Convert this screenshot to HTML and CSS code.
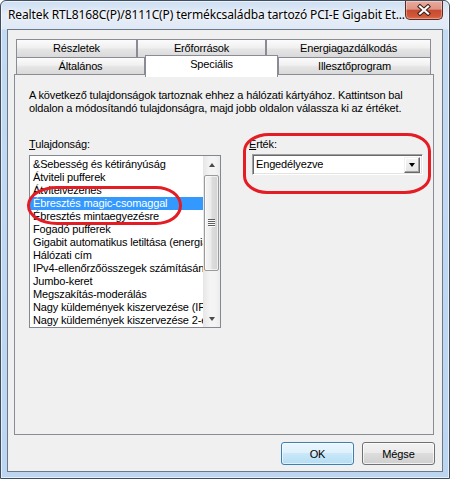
FILE: index.html
```html
<!DOCTYPE html>
<html>
<head>
<meta charset="utf-8">
<link rel="stylesheet" href="styles.css">
</head>
<body>
<div class="window">
  <div class="titlebar">
    <span class="title">Realtek RTL8168C(P)/8111C(P) termékcsaládba tartozó PCI-E Gigabit Et...</span>
    <div class="close">
      <svg width="14" height="12" viewBox="0 0 14 12">
        <path d="M3 2.5 L11 9.5 M11 2.5 L3 9.5" stroke="#3b1f1a" stroke-width="4.2" stroke-linecap="square" fill="none"/>
        <path d="M3 2.5 L11 9.5 M11 2.5 L3 9.5" stroke="#ffffff" stroke-width="2.2" stroke-linecap="square" fill="none"/>
      </svg>
    </div>
  </div>
  <div class="client">
    <div class="tabs">
      <div class="tabrow row1">
        <div class="tab w121">Részletek</div>
        <div class="tab w129">Erőforrások</div>
        <div class="tab w165">Energiagazdálkodás</div>
      </div>
      <div class="tabrow row2">
        <div class="tab w129">Általános</div>
        <div class="tab w133 selected">Speciális</div>
        <div class="tab w153">Illesztőprogram</div>
      </div>
    </div>
    <div class="panel">
      <p class="desc">A következő tulajdonságok tartoznak ehhez a hálózati kártyához. Kattintson bal<br>oldalon a módosítandó tulajdonságra, majd jobb oldalon válassza ki az értéket.</p>
      <div class="fields">
        <div class="col-left">
          <div class="label"><u>T</u>ulajdonság:</div>
          <div class="listbox">
            <ul class="items">
              <li>&amp;Sebesség és kétirányúság</li>
              <li>Átviteli pufferek</li>
              <li>Átvitelvezérlés</li>
              <li class="sel">Ébresztés magic-csomaggal</li>
              <li>Ébresztés mintaegyezésre</li>
              <li>Fogadó pufferek</li>
              <li>Gigabit automatikus letiltása (energiagazdálkodás)</li>
              <li>Hálózati cím</li>
              <li>IPv4-ellenőrzőösszegek számításának kiszervezése</li>
              <li>Jumbo-keret</li>
              <li>Megszakítás-moderálás</li>
              <li>Nagy küldemények kiszervezése (IPv4)</li>
              <li>Nagy küldemények kiszervezése 2-es verzió (IPv4)</li>
            </ul>
            <div class="vscroll">
              <div class="sbtn"><span class="arrow up"></span></div>
              <div class="track"><div class="thumb"><span class="grip"></span></div></div>
              <div class="sbtn"><span class="arrow down"></span></div>
            </div>
          </div>
        </div>
        <div class="col-right">
          <div class="label"><u>É</u>rték:</div>
          <div class="combo">
            <span class="combo-text">Engedélyezve</span>
            <div class="drop"><span class="arrow down dark"></span></div>
          </div>
        </div>
      </div>
    </div>
    <div class="buttons">
      <button class="btn default">OK</button>
      <button class="btn">Mégse</button>
    </div>
  </div>
  <div class="mark mark1"></div>
  <div class="mark mark2"></div>
</div>
</body>
</html>
```

FILE: styles.css
```css
* { box-sizing: border-box; }
html, body { margin: 0; padding: 0; background: #ffffff; }
body {
  width: 450px; height: 479px; overflow: hidden;
  font-family: "Liberation Sans", Arial, sans-serif;
  font-size: 11px; color: #000;
  letter-spacing: -0.15px;
}
.window {
  position: relative;
  width: 450px; height: 479px;
  border: 1px solid #3f4d5e;
  border-radius: 6px 6px 0 0;
  padding: 0 6px 6px;
  background: linear-gradient(to bottom, #cddff3 0px, #e4ecf7 14px, #e0eaf6 28px, #c3daf2 29px, #bcd6f1 100%);
  box-shadow: inset 0 0 0 1px rgba(255,255,255,0.6);
  display: flex; flex-direction: column;
}
.titlebar { height: 28px; display: flex; align-items: flex-start; }
.title {
  font-family: "Noto Sans", "Open Sans", sans-serif;
  font-size: 12px; line-height: 16px;
  letter-spacing: -0.12px;
  margin-top: 6px; padding-left: 1px;
  white-space: nowrap;
  text-shadow: 0 0 5px #fff, 0 0 2px #fff;
}
.close {
  margin-left: auto;
  width: 47px; height: 19px;
  border: 1px solid #5a2a22; border-top: none;
  border-radius: 0 0 5px 5px;
  background: linear-gradient(#e9ab9e 0%, #dd9484 45%, #c84a30 52%, #cf5538 80%, #d86a4c 100%);
  box-shadow: inset 0 0 0 1px rgba(255,255,255,0.35);
  display: flex; align-items: center; justify-content: center;
}
.close svg { display: block; }
.client {
  flex: 1;
  border: 1px solid #6a7888;
  background: #f0f0f0;
  display: flex; flex-direction: column;
  padding: 9px 0 6px 0;
}
.tabs { margin-left: 8px; width: 415px; }
.tabrow { display: flex; align-items: flex-start; }
.tab {
  border: 1px solid #898c95; border-bottom: none;
  background: linear-gradient(#fbfbfb, #f0f0f0 45%, #e5e5e5 55%, #d9d9d9);
  text-align: center; white-space: nowrap;
}
.row1 .tab { height: 18px; line-height: 17px; }
.row2 .tab { height: 17px; line-height: 16px; }
.row2 .tab.selected {
  background: #ffffff;
  height: 22px; margin-top: -2px; margin-bottom: -3px;
  line-height: 16px;
  position: relative; z-index: 1;
}
.w121 { width: 121px; } .w129 { width: 129px; } .w165 { width: 165px; }
.w133 { width: 133px; } .w153 { width: 153px; }
.panel {
  margin-left: 6px; width: 420px; height: 361px;
  border: 1px solid #898c95;
  background: #f0f0f0;
  padding: 14px 0 0 14px;
}
.desc { margin: 0; line-height: 13px; white-space: nowrap; }
.fields { display: flex; margin-top: 23px; }
.col-left { width: 192px; }
.col-right { margin-left: 28px; }
.label { line-height: 13px; height: 13px; white-space: nowrap; }
.label u { text-decoration-thickness: 1px; text-underline-offset: 1px; }
.listbox {
  margin-top: 4px;
  width: 192px; height: 173px;
  border: 1px solid #828790;
  background: #fff;
  display: flex;
}
.items {
  list-style: none; margin: 0; padding: 2px 0 0 0;
  flex: 1; min-width: 0; overflow: hidden;
}
.items li {
  height: 13px; line-height: 13px;
  padding-left: 3px;
  white-space: nowrap; overflow: hidden;
}
.items li.sel { background: #3399ff; color: #fff; }
.vscroll {
  width: 17px; display: flex; flex-direction: column;
  background: linear-gradient(to right, #e6e6e6, #f4f4f4 40%, #f4f4f4 70%, #ececec);
}
.sbtn { height: 17px; display: flex; align-items: center; justify-content: center; }
.track { flex: 1; padding-top: 2px; }
.thumb {
  margin-left: 1px; width: 15px; height: 96px;
  border: 1px solid #9b9b9b; border-radius: 2px;
  background: linear-gradient(to right, #f5f5f5, #ececec 45%, #dcdcdc 55%, #d4d4d4);
  box-shadow: inset 0 0 0 1px rgba(255,255,255,0.6);
  display: flex; align-items: center; justify-content: center;
}
.grip {
  width: 7px; height: 8px;
  background: repeating-linear-gradient(to bottom, #5f5f5f 0, #5f5f5f 1px, #fafafa 1px, #fafafa 2px);
}
.arrow { width: 0; height: 0; border-left: 3.5px solid transparent; border-right: 3.5px solid transparent; }
.arrow.up { border-bottom: 4px solid #4a4a4a; }
.arrow.down { border-top: 4px solid #4a4a4a; }
.arrow.down.dark { border-top-color: #000; }
.combo {
  margin-top: 3px; margin-left: 3px;
  width: 171px; height: 21px;
  border: 1px solid; border-color: #a0a0a0 #ffffff #ffffff #a0a0a0;
  box-shadow: inset 1px 1px 0 #696969, inset -1px -1px 0 #e3e3e3;
  background: #fff;
  display: flex; align-items: center;
  padding: 0 2px 0 3px;
}
.combo-text { flex: 1; line-height: 13px; }
.drop {
  width: 16px; height: 16px;
  border: 1px solid; border-color: #f0f0f0 #696969 #696969 #f0f0f0;
  background: linear-gradient(#f6f6f6, #e4e4e4);
  box-shadow: inset -1px -1px 0 #a0a0a0, inset 1px 1px 0 #fff;
  display: flex; align-items: center; justify-content: center;
}
.buttons {
  display: flex; justify-content: flex-end; gap: 8px;
  margin-top: 7px; padding-right: 7px;
}
.btn {
  width: 73px; height: 23px; margin: 0; padding: 0;
  font-family: "Liberation Sans", Arial, sans-serif; font-size: 11px; color: #000;
  letter-spacing: -0.15px;
  border: 1px solid #707070; border-radius: 3px;
  background: linear-gradient(#f2f2f2, #ebebeb 45%, #dddddd 50%, #cfcfcf);
  box-shadow: inset 0 0 0 1px rgba(255,255,255,0.7);
}
.btn.default {
  border-color: #3c7fb1;
  background: linear-gradient(#eaf6fd, #dff1fb 45%, #cae8f9 50%, #b4ddf4);
  box-shadow: inset 0 0 0 1px rgba(255,255,255,0.6);
}
.mark {
  position: absolute;
  border: 3px solid #e41c24;
}
.mark1 { left: 26px; top: 185px; width: 155px; height: 39px; border-radius: 30px 26px 26px 30px / 19px 19px 19px 19px; }
.mark2 { left: 242px; top: 132px; width: 188px; height: 61px; border-radius: 26px 24px 26px 24px / 18px 18px 18px 18px; }
```
